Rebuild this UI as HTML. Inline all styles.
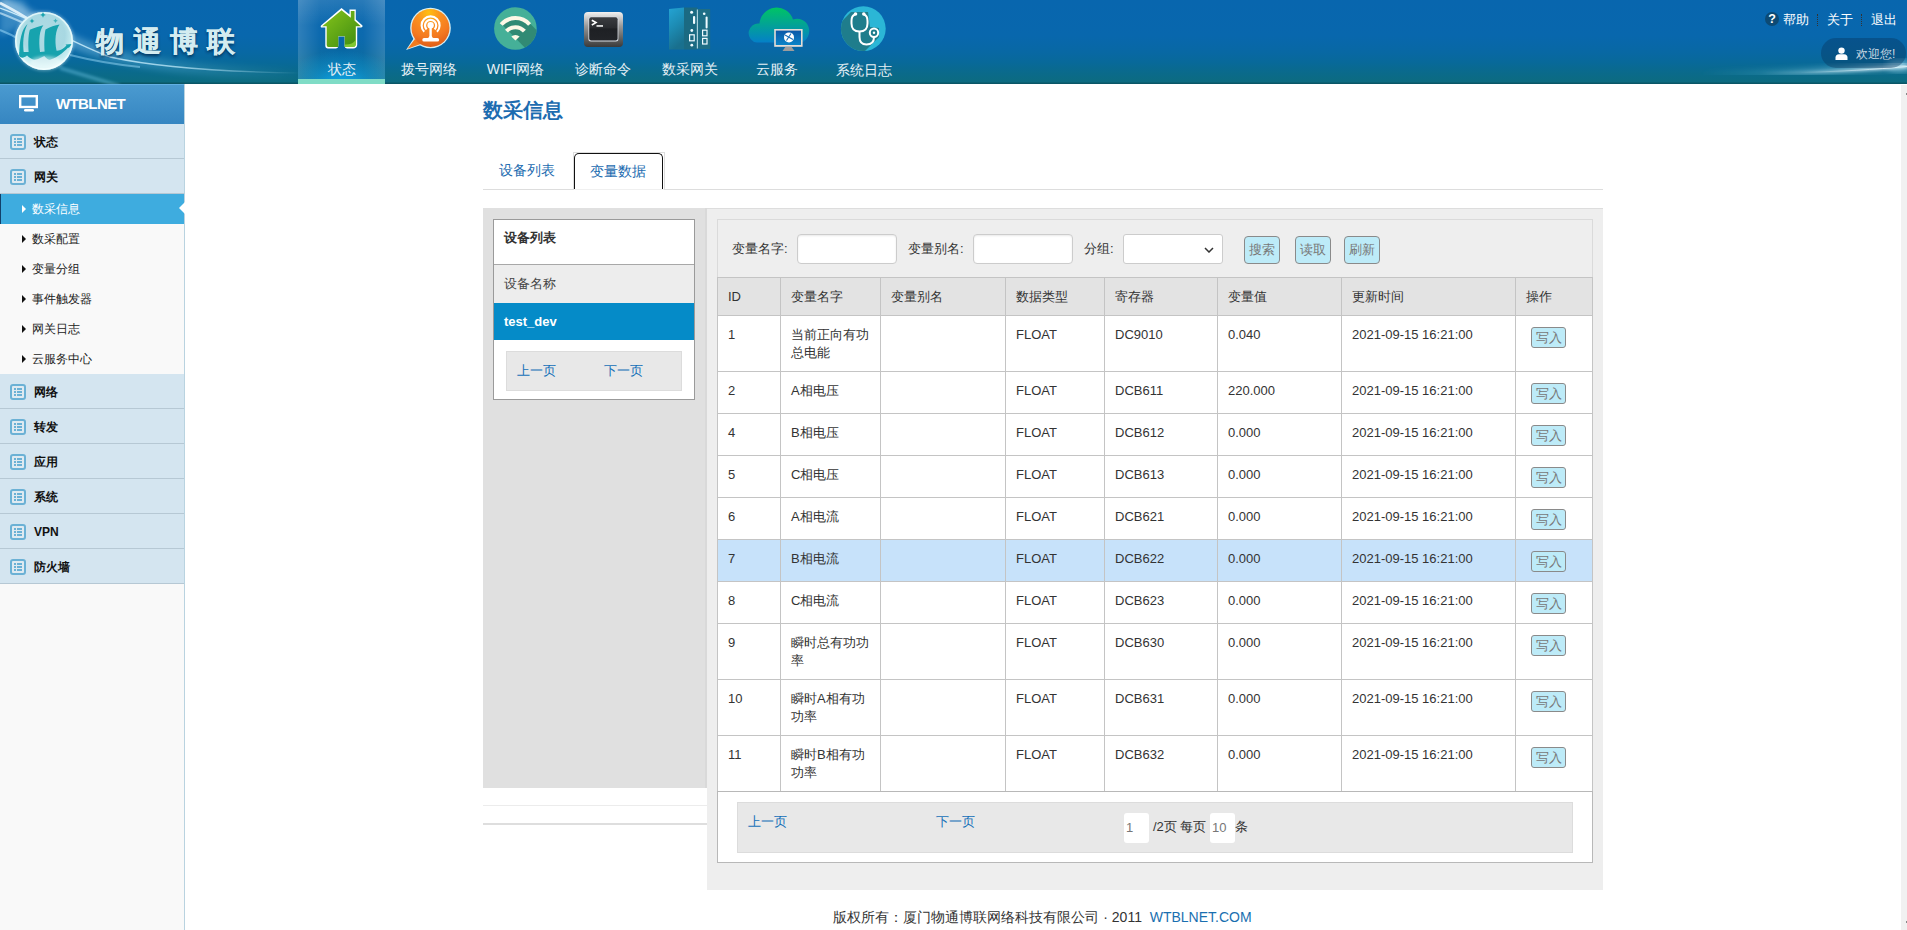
<!DOCTYPE html>
<html><head><meta charset="utf-8">
<style>
*{box-sizing:border-box;margin:0;padding:0}
html,body{width:1907px;height:930px;overflow:hidden;background:#fff;font-family:"Liberation Sans",sans-serif;color:#333}
.abs{position:absolute}
#hdr{position:absolute;left:0;top:0;width:1907px;height:84px;overflow:hidden;
 background:linear-gradient(to bottom,#0866ae 0px,#0867ad 36px,#0868a4 52px,#08699a 62px,#0a6a8c 72px,#0c6b80 82px,#0a5666 83px,#0a5666 84px)}
#side{position:absolute;left:0;top:84px;width:185px;height:846px;background:#f9f9f9;border-right:1px solid #b9d3e0}
#main{position:absolute;left:185px;top:84px;width:1715px;height:846px;background:#fff}
#sb{position:absolute;left:1901px;top:85px;width:6px;height:845px;background:#f1f1f1}

.sh{position:relative;height:40px;background:linear-gradient(#4a9ad0,#3686c1);border-top:1px solid #62b0e4;color:#fff}
.sh .mon{position:absolute;left:19px;top:10px}
.sh span{position:absolute;left:56px;top:10px;font-weight:bold;font-size:15px;letter-spacing:-0.6px;line-height:18px}
.mi{position:relative;height:35px;background:#d4e5f0;border-bottom:1px solid #b6c8d4}
.mi b{position:absolute;left:34px;top:9px;font-size:12px;line-height:18px;color:#111}
.ic{position:absolute;left:10px;top:10px;width:16px;height:16px;border:2px solid #6bb1d5;border-radius:3px;background:#dfeaf1}
.ic:before{content:"";position:absolute;left:2px;top:2px;width:8px;height:8px;background:linear-gradient(#6bb1d5 0 2px,transparent 2px 3px,#6bb1d5 3px 5px,transparent 5px 6px,#6bb1d5 6px 8px)}
.ic:after{content:"";position:absolute;left:4px;top:2px;width:1px;height:8px;background:#dfeaf1}
.sm{position:relative;height:30px;font-size:12px;line-height:31px;padding-left:32px;color:#222}
.sm .tri{position:absolute;left:22px;top:11px;width:0;height:0;border-left:4px solid #111;border-top:4px solid transparent;border-bottom:4px solid transparent}
.sm.act{background:#3eacdf;color:#fff;border-left:1px solid #12406a;padding-left:31px}
.sm.act .tri{border-left-color:#fff;left:21px}
.notch{position:absolute;right:-1px;top:8px;width:0;height:0;border-right:6px solid #fff;border-top:6px solid transparent;border-bottom:6px solid transparent}

.navact{position:absolute;left:298px;top:0;width:87px;height:84px;background:radial-gradient(ellipse 70% 40% at 50% 100%,rgba(12,170,242,0.95) 0%,rgba(14,155,230,0.5) 50%,rgba(14,140,220,0) 100%),linear-gradient(to right,rgba(255,255,255,0.16) 0%,rgba(255,255,255,0.02) 25%,rgba(255,255,255,0) 50%,rgba(255,255,255,0.02) 75%,rgba(255,255,255,0.16) 100%),linear-gradient(to bottom,rgba(255,255,255,0.12) 0%,rgba(255,255,255,0) 30%,rgba(0,0,0,0) 60%)}
.navact:after{content:"";position:absolute;left:0;bottom:0;width:87px;height:5px;background:#7fdcc6}
.nav{position:absolute;top:0;width:87px;height:84px}
.nav svg{position:absolute;left:0;top:0}
.nav span{position:absolute;left:0;top:59px;width:87px;text-align:center;color:#e6f0f6;font-size:14px;line-height:20px;white-space:nowrap}
.tlinks{position:absolute;left:1765px;top:10px;width:140px;height:20px;color:#fff;font-size:13px}
.tlinks span{position:absolute;top:0;line-height:20px}
.tlinks .q{position:absolute;left:0;top:2px;width:14px;height:14px;border-radius:7px;background:#0c4a74;color:#fff;font-style:normal;font-weight:bold;font-size:12.5px;line-height:15px;text-align:center}
.tlinks .sep{position:absolute;top:4px;height:12px;border-left:1px dotted #333}
.welc{position:absolute;left:1821px;top:38px;width:85px;height:30px;border-radius:15px;background:rgba(8,50,90,0.38);color:#c8d8e2;font-size:12px}
.welc span{position:absolute;left:35px;top:7px;line-height:18px}

#cnt{position:absolute;left:0;top:0;width:1907px;height:930px}
#cnt>div{position:absolute}
.ttl{left:483px;top:96px;font-size:20px;line-height:28px;font-weight:bold;color:#1d6cb0}
.tabline{left:483px;top:189px;width:1120px;height:1px;background:#ddd}
.tab1{left:499px;top:160px;font-size:14px;line-height:20px;color:#1d6cb0}
.tab2{left:573px;top:152px;width:92px;height:38px;border:1px solid #ddd;border-bottom:none;background:#fff}
.tab2 .ring{position:absolute;left:0.3px;top:0px;width:88.4px;height:36.6px;border:1.7px solid #111;border-bottom:none;border-radius:5px 5px 0 0}
.tab2:after{content:"";position:absolute;left:0;bottom:0;width:90px;height:1px;background:#f0f0f0}
.tab2 span{position:absolute;left:16px;top:8px;font-size:14px;line-height:20px;color:#1d6cb0}
.lp{left:483px;top:208px;width:224px;height:580px;background:#e0e0e0;border-right:2px solid #d9d9d9}
.dl{position:absolute;left:10px;top:11px;width:202px;height:181px;border:1px solid #9a9a9a;background:#fff}
.dlh{height:45px;border-bottom:1px solid #a8a8a8;font-weight:bold;font-size:13px;line-height:18px;padding:9px 0 0 10px;color:#333}
.dln{height:38px;background:#ededed;font-size:13px;line-height:18px;padding:10px 0 0 10px;color:#444}
.dld{height:37px;background:#058bc8;font-size:13px;line-height:18px;padding:10px 0 0 10px;color:#fff;font-weight:bold}
.dlp{position:relative;margin:11px 0 0 12px;width:176px;height:40px;background:#e8e8e8;border:1px solid #dcdcdc;font-size:13px;color:#1570b8}
.dlp span{position:absolute;top:10px;line-height:18px}
.lpl1{left:483px;top:805px;width:224px;height:1px;background:#ececec}
.lpl2{left:483px;top:823px;width:224px;height:2px;background:#dedede}
.rp{left:707px;top:208px;width:896px;height:682px;background:#eeeeee;border-top:1px solid #dddddd}
.ib{position:absolute;left:10px;top:10px;width:876px;height:644px;border:1px solid #dadada}
.lbl{position:absolute;top:20px;font-size:13px;line-height:18px;color:#333}
.inp{position:absolute;top:14px;width:100px;height:30px;background:#fff;border:1px solid #ccc;border-radius:4px;box-shadow:inset 0 1px 2px rgba(0,0,0,.09)}
.sel{position:absolute;top:14px;width:100px;height:30px;background:#fff;border:1px solid #ccc;border-radius:3px}
.sel svg{position:absolute;right:8px;top:12px}
.btn{position:absolute;top:16px;width:36px;height:28px;background:#bdebf8;border:1px solid #8a8a8a;border-radius:4px;color:#777;font-style:normal;font-size:13px;line-height:26px;text-align:center}
.tb{position:absolute;left:-1px;top:57px;width:876px;border-collapse:collapse;table-layout:fixed;font-size:13px;color:#333;background:#fff}
.tb td{border:1px solid #c4c4c4;padding:10px 10px 0 10px;vertical-align:top;line-height:18px;white-space:nowrap;overflow:hidden}
.tb tr.th td{background:#e3e3e3;height:38px}
.tb tr.r1 td{height:42px}
.tb tr.r2 td{height:56px}
.tb tr.hl td{background:#c7e2fa}
.wb{display:inline-block;margin-left:5px;margin-top:1px;width:35px;height:21px;background:#bdebf8;border:1px solid #8a8a8a;border-radius:3px;color:#777;font-style:normal;font-size:13px;line-height:19px;text-align:center}
.pgw{position:absolute;left:-1px;top:571px;width:876px;height:72px;background:#fff;border:1px solid #b8b8b8}
.pg{position:absolute;left:19px;top:582px;width:836px;height:51px;background:#e8e8e8;border:1px solid #dcdcdc;font-size:13px}
.pg span{position:absolute;line-height:18px}
.lk{top:10px;color:#1570b8}
.pt{top:15px;color:#333}
.pin{position:absolute;top:10px;width:25px;height:30px;background:#fff;border-radius:3px;font-style:normal;font-size:13px;line-height:29px;padding-left:2px;color:#777}
.ft{left:0;top:907px;width:1715px;padding-left:185px;box-sizing:content-box;text-align:center;font-size:14px;line-height:20px;color:#333}
.ft span{color:#1a6fb0}
</style></head><body>
<div id="hdr">
 <svg class="abs" style="left:0;top:0" width="1907" height="84" viewBox="0 0 1907 84">
  <defs>
   <linearGradient id="sw1" x1="0" y1="0" x2="1" y2="0">
    <stop offset="0" stop-color="#fff" stop-opacity="0.9"/><stop offset="0.5" stop-color="#8fe0ff" stop-opacity="0.5"/><stop offset="1" stop-color="#8fe0ff" stop-opacity="0"/>
   </linearGradient>
   <linearGradient id="sw2" x1="0" y1="0" x2="1" y2="0">
    <stop offset="0" stop-color="#5cc8f0" stop-opacity="0"/><stop offset="0.6" stop-color="#9fe4ff" stop-opacity="0.7"/><stop offset="1" stop-color="#fff" stop-opacity="0.9"/>
   </linearGradient>
   <radialGradient id="glob" cx="0.5" cy="0.4" r="0.6">
    <stop offset="0" stop-color="#b0dce4"/><stop offset="0.6" stop-color="#a8d8e2"/><stop offset="0.85" stop-color="#c8eef2"/><stop offset="1" stop-color="#eefcfc"/>
   </radialGradient>
   <linearGradient id="sw3" x1="0" y1="0" x2="1" y2="0"><stop offset="0" stop-color="#e8f8ff" stop-opacity="0"/><stop offset="0.7" stop-color="#e8f8ff" stop-opacity="0.8"/><stop offset="1" stop-color="#fff" stop-opacity="1"/></linearGradient><filter id="bl2s" x="-20%" y="-40%" width="140%" height="180%"><feGaussianBlur stdDeviation="1.8"/></filter><linearGradient id="sw4" gradientUnits="userSpaceOnUse" x1="0" y1="0" x2="300" y2="0"><stop offset="0" stop-color="#d8f4ff" stop-opacity="0.9"/><stop offset="0.6" stop-color="#c8f0ff" stop-opacity="0.7"/><stop offset="1" stop-color="#c8f0ff" stop-opacity="0"/></linearGradient><filter id="bl0"><feGaussianBlur stdDeviation="0.6"/></filter><filter id="bl1"><feGaussianBlur stdDeviation="1.5"/></filter>
   <filter id="bl2"><feGaussianBlur stdDeviation="3"/></filter>
  </defs>
  <!-- left swooshes -->
  <path d="M0 2 C20 10 40 22 70 40 C110 60 180 72 300 74" stroke="url(#sw1)" stroke-width="12" fill="none" filter="url(#bl2)" opacity="0.45"/>
  <path d="M0 3 C10 8 20 14 32 21" stroke="#fff" stroke-width="2.6" fill="none" filter="url(#bl0)" opacity="0.85"/>
  <path d="M0 13 C10 17 20 21 30 26" stroke="#e8f8ff" stroke-width="2" fill="none" filter="url(#bl0)" opacity="0.6"/>
  <path d="M0 30 C8 33 14 36 22 41" stroke="#9fe0ff" stroke-width="2" fill="none" filter="url(#bl0)" opacity="0.5"/>
  <path d="M0 0 L0 36 L30 22 L24 0 Z" fill="#bfeaff" opacity="0.25" filter="url(#bl2)"/>
  <path d="M0 8 C40 22 70 42 110 57 C160 68 230 72 300 73" stroke="url(#sw4)" stroke-width="1.3" fill="none"/>
  <path d="M70 55 C90 60 110 64 140 67" stroke="#a8e4ff" stroke-width="2" fill="none" filter="url(#bl0)" opacity="0.45"/>
  <path d="M60 68 C80 74 100 80 120 86" stroke="#7fd4f4" stroke-width="3" fill="none" filter="url(#bl1)" opacity="0.45"/>
  <!-- right swoosh -->
  <path d="M1700 74 C1780 73.5 1850 71 1907 64" stroke="url(#sw2)" stroke-width="5" fill="none" filter="url(#bl2)" opacity="0.7"/>
  <path d="M1760 73.5 C1820 72.5 1870 70 1907 66" stroke="url(#sw3)" stroke-width="2" fill="none" filter="url(#bl1)"/>
  <path d="M1800 72.5 C1840 71.5 1875 69.5 1907 66.5" stroke="url(#sw3)" stroke-width="1" fill="none" opacity="0.8" filter="url(#bl0)"/>
  <ellipse cx="1900" cy="66" rx="14" ry="6" fill="#bff0ff" opacity="0.45" filter="url(#bl2)"/>
  <!-- globe -->
  <circle cx="44" cy="41" r="30" fill="#e8fbff" opacity="0.35" filter="url(#bl1)"/>
  <circle cx="44" cy="41" r="29" fill="url(#glob)"/>
  <circle cx="44" cy="41" r="28.2" fill="none" stroke="#f4ffff" stroke-width="1.6" opacity="0.7"/>
  <g fill="#17a3ae">
   <path d="M27.5,24 C22,29 19,40 19.4,56 L24,54 C22.5,44 23,33 27.5,24 Z"/>
   <path d="M29.8,29.8 C35,27.5 40,26 43.4,25.3 C39.5,30 38.5,40 40,52 L29,56 C28,46 28,36 29.8,29.8 Z"/>
   <path d="M45.5,29.5 C50,27 55,25 59.6,24.4 C55.5,30 54.5,40 56.5,50.6 L45,56 C44,46 44,36 45.5,29.5 Z"/>
   <path d="M19.4,52 L19.4,56 C21,58.5 24,58 27,55.5 C30,58.5 33,60 36,59.6 C39,59 41.5,57 44.3,56 C46.5,58.5 48.5,60 50.6,59.6 C58,57.5 65,51 71.4,44.3 L67,45 C63,49 60,51 56.5,50.6 L40,52 L24,52 Z"/>
   <path d="M71.4,44.3 L65.5,44.6 L68.8,48 Z"/>
   <path d="M32,18.5 L32.8,20.2 L34.5,21 L32.8,21.8 L32,23.5 L31.2,21.8 L29.5,21 L31.2,20.2Z"/>
   <path d="M43,12 L43.9,14 L45.8,14.9 L43.9,15.8 L43,17.8 L42.1,15.8 L40.2,14.9 L42.1,14Z"/>
   <path d="M55.5,18.5 L56.3,20 L57.8,20.8 L56.3,21.6 L55.5,23 L54.7,21.6 L53.2,20.8 L54.7,20Z" opacity="0.7"/>
  </g>
  <ellipse cx="46" cy="62" rx="16" ry="6" fill="#fff" opacity="0.45" filter="url(#bl1)"/>
  <!-- logo text shadow glow -->
  <text x="96" y="52.5" font-family="Liberation Sans, sans-serif" font-weight="900" font-size="28" letter-spacing="9" fill="#041e40" opacity="0.8" filter="url(#bl2s)">物通博联</text>
  <text x="96" y="50.5" font-family="Liberation Sans, sans-serif" font-weight="900" font-size="28" letter-spacing="9" fill="#d4ecf0" stroke="#d4ecf0" stroke-width="0.3">物通博联</text>
 </svg>
 <div class="navact"></div>
 <div class="nav" style="left:298px">
  <svg width="87" height="56" viewBox="0 0 87 56"><g transform="translate(-298,0)">
   <path d="M341.5 8 L349.5 14.5 L349.5 9.5 L355.8 9.5 L355.8 19.5 L362.5 25.5 Q363 27.5 361 27.5 L357.2 27.5 L357.2 45 Q357 48.4 353 48.4 L347 48.4 Q344.6 48.4 344.6 46 L344.6 36.5 L338.3 36.5 L338.3 46 Q338.3 48.4 336 48.4 L328 48.4 Q325.3 48.4 325.3 45.5 L325.3 27.5 L322 27.5 Q320 27.5 321 25.5 Z" fill="#fff"/>
   <defs><linearGradient id="hg" x1="0" y1="0" x2="1" y2="1"><stop offset="0" stop-color="#86c41a"/><stop offset="1" stop-color="#3c8a12"/></linearGradient></defs>
   <path d="M341.5 10.3 L350.8 17.8 L350.8 11 L354.5 11 L354.5 20.6 L360.8 26.2 L355.8 26.2 L355.8 44.5 Q355.6 47 352.5 47 L344.7 47 L344.7 36.3 L338.3 36.3 L338.3 47 L328.5 47 Q326.7 47 326.7 45 L326.7 26.2 L322.2 26.2 Z" fill="url(#hg)"/>
   <path d="M344.7 47 L352.5 47 Q355.6 47 355.8 44 L355.8 40 Q352 45 344.7 44.5 Z" fill="#8fd43a" opacity="0.8"/>
  </g></svg>
  <span>状态</span></div>
 <div class="nav" style="left:385px">
  <svg width="87" height="56" viewBox="0 0 87 56"><g transform="translate(-385,0)">
   <defs><radialGradient id="og" cx="0.45" cy="0.1" r="0.9"><stop offset="0" stop-color="#ffc010"/><stop offset="0.35" stop-color="#fb9020"/><stop offset="0.7" stop-color="#f47a20"/><stop offset="1" stop-color="#e05e18"/></radialGradient></defs>
   <circle cx="430.5" cy="28" r="20.3" fill="#d8f0f4"/>
   <path d="M406 50 L414 38 L424 44 Z" fill="#d8f0f4"/>
   <path d="M407.5 48.8 L415 39 L422 43.5 Z" fill="#f07a1e"/>
   <circle cx="430.5" cy="28" r="19" fill="url(#og)"/>
   <path d="M424.24 31.76 A9 9 0 1 1 436.96 31.76" stroke="#fff" stroke-width="2.1" fill="none"/>
   <path d="M426.64 29.36 A5.6 5.6 0 1 1 434.56 29.36" stroke="#fff" stroke-width="2.2" fill="none"/>
   <circle cx="430.6" cy="25.3" r="3.2" fill="#fff"/>
   <path d="M429.4 27 L431.8 27 L431.8 36 Q432 37.8 434 38.2 L427.2 38.2 Q429.2 37.8 429.4 36 Z" fill="#fff"/>
   <rect x="422.3" y="38" width="16.8" height="3.6" rx="1.7" fill="#fff"/>
  </g></svg>
  <span>拨号网络</span></div>
 <div class="nav" style="left:472px">
  <svg width="87" height="56" viewBox="0 0 87 56"><g transform="translate(-472,0)">
   <defs><clipPath id="wc"><circle cx="515.4" cy="28.5" r="21.3"/></clipPath></defs>
   <circle cx="515.4" cy="28.5" r="21.3" fill="#45b098"/>
   <path d="M501 23.5 L512 18 L520 18 L530 23.5 L562 55 L532 55 Z" fill="#318a74" clip-path="url(#wc)"/>
   <path d="M501.2 26.5 A19 19 0 0 1 529.6 26.5" stroke="#fdf8e6" stroke-width="4" fill="none" transform="translate(0,-2)"/>
   <path d="M506.5 32.2 A12 12 0 0 1 524.4 32.2" stroke="#fdf8e6" stroke-width="4" fill="none" transform="translate(0,-1)"/>
   <path d="M511.3 36.6 A6 6 0 0 1 519.6 36.6 L515.4 40.5 Z" fill="#fdf8e6"/>
  </g></svg>
  <span>WIFI网络</span></div>
 <div class="nav" style="left:559px">
  <svg width="87" height="56" viewBox="0 0 87 56"><g transform="translate(-559,0)">
   <defs><linearGradient id="tg" x1="0" y1="0" x2="0" y2="1"><stop offset="0" stop-color="#f2f2f2"/><stop offset="0.4" stop-color="#9a9a9a"/><stop offset="1" stop-color="#3a3a3a"/></linearGradient>
   <linearGradient id="tg2" x1="0" y1="0" x2="0" y2="1"><stop offset="0" stop-color="#3a3c40"/><stop offset="0.45" stop-color="#2a2c30"/><stop offset="0.5" stop-color="#1e2024"/><stop offset="1" stop-color="#222428"/></linearGradient></defs>
   <rect x="584" y="12" width="39" height="35" rx="4" fill="url(#tg)"/>
   <rect x="588.4" y="16.4" width="30" height="25" rx="2.5" fill="#d8dde4"/>
   <rect x="589.2" y="17.2" width="28.4" height="23.4" rx="2" fill="url(#tg2)"/>
   <path d="M591.8 20.2 L596 22.6 L591.8 25" stroke="#fff" stroke-width="1.6" fill="none"/>
   <rect x="596.5" y="25.2" width="6.5" height="1.5" fill="#fff"/>
  </g></svg>
  <span>诊断命令</span></div>
 <div class="nav" style="left:646px">
  <svg width="87" height="56" viewBox="0 0 87 56"><g transform="translate(-646,0)">
   <defs><linearGradient id="gg" x1="0" y1="0" x2="0.3" y2="1"><stop offset="0" stop-color="#24a4d4"/><stop offset="0.5" stop-color="#1d8cb4"/><stop offset="1" stop-color="#19708e"/></linearGradient></defs>
   <path d="M669 9 L684 7.5 L684 49.5 L669 49.5 Z" fill="url(#gg)"/>
   <rect x="684" y="7.5" width="13.5" height="42" fill="#1b6a82"/>
   <rect x="696.8" y="9.5" width="1.3" height="39" fill="#a8d0dc"/>
   <rect x="698" y="9" width="12.2" height="40" fill="#1e6e86"/>
   <g fill="#f0fbff">
    <circle cx="691.6" cy="12.2" r="1.5"/><rect x="693" y="16" width="2.2" height="8" rx="1"/>
    <circle cx="691.8" cy="30.5" r="1.4"/><circle cx="691.8" cy="45.2" r="1.4"/>
    <circle cx="704.2" cy="13.8" r="1.3"/><rect x="705.6" y="16.5" width="2" height="12" rx="1"/>
   </g>
   <g fill="none" stroke="#f0fbff" stroke-width="1.2">
    <rect x="689.6" y="34.8" width="4.6" height="6"/><rect x="702.6" y="30.2" width="4.4" height="5.6"/><rect x="702.6" y="38.4" width="4.4" height="5.6"/>
   </g>
  </g></svg>
  <span>数采网关</span></div>
 <div class="nav" style="left:733px">
  <svg width="87" height="56" viewBox="0 0 87 56"><g transform="translate(-733,0)">
   <defs><linearGradient id="cg" x1="0" y1="0" x2="0" y2="1"><stop offset="0" stop-color="#00c464"/><stop offset="1" stop-color="#0480c8"/></linearGradient>
   <linearGradient id="sg" x1="0" y1="0" x2="0" y2="1"><stop offset="0" stop-color="#0a58a8"/><stop offset="1" stop-color="#0a84c8"/></linearGradient></defs>
   <path d="M757 42.6 A9.6 9.6 0 0 1 759.5 23.5 A17.2 17.2 0 0 1 793 19.5 A11 11 0 0 1 801 42.6 Z" fill="url(#cg)"/>
   <rect x="774.2" y="29" width="28.4" height="17.8" fill="#e4dcd6"/>
   <rect x="775.8" y="30.6" width="25.2" height="14.4" fill="url(#sg)"/>
   <path d="M785.5 46.8 L791.5 46.8 L794.5 51 L782.5 51 Z" fill="#9c9c9c"/>
   <circle cx="789" cy="37.4" r="5" fill="#fff"/>
   <path d="M785 35 L793 39.5 M786.5 40.5 L791 33.5" stroke="#1a70b8" stroke-width="1.1"/>
  </g></svg>
  <span>云服务</span></div>
 <div class="nav" style="left:820px">
  <svg width="87" height="56" viewBox="0 0 87 56"><g transform="translate(-820,0)">
   <defs><clipPath id="stc"><circle cx="863.3" cy="28.7" r="22.4"/></clipPath></defs>
   <circle cx="863.3" cy="28.7" r="22.4" fill="#2bb6d6"/>
   <path d="M851 12 L868 12 L870 27 L879 28 L879 37 L849 67 L821 42 Z" fill="#1f7d8c" clip-path="url(#stc)"/>
   <path d="M855 14.5 Q851.5 15.5 851.5 21 L851.5 23.5 Q851.5 31.5 859.5 31.5 Q867.5 31.5 867.5 23.5 L867.5 21 Q867.5 15.5 864 14.5" stroke="#fff" stroke-width="2" fill="none"/>
   <circle cx="855.5" cy="14" r="1.8" fill="#fff"/><circle cx="863.8" cy="14" r="1.8" fill="#fff"/>
   <path d="M859.5 31.5 L859.5 37 Q859.5 44.5 866.5 44.5 Q874 44.5 874 37" stroke="#fff" stroke-width="2" fill="none"/>
   <circle cx="874" cy="32.7" r="4.2" stroke="#fff" stroke-width="2" fill="#1f7d8c"/>
   <circle cx="874" cy="32.7" r="1.2" fill="#fff"/>
  </g></svg>
  <span style="top:60px">系统日志</span></div>
 <div class="tlinks"><i class="q">?</i><span style="left:18px">帮助</span><i class="sep" style="left:52px"></i><span style="left:62px">关于</span><i class="sep" style="left:96px"></i><span style="left:106px">退出</span></div>
 <div class="welc"><svg class="abs" style="left:14px;top:9px" width="13" height="13" viewBox="0 0 13 13"><circle cx="6.5" cy="3.6" r="3.2" fill="#fff"/><path d="M0.5 13 L0.5 10.5 Q0.5 7.5 4 7.2 L9 7.2 Q12.5 7.5 12.5 10.5 L12.5 13 Z" fill="#fff"/></svg><span>欢迎您!</span></div>
</div>

<div id="side">
 <div class="sh"><svg class="mon" width="20" height="17" viewBox="0 0 20 17"><rect x="1.2" y="1.2" width="16.6" height="10.8" fill="none" stroke="#fff" stroke-width="2.4"/><rect x="5" y="14" width="10" height="2.6" rx="1.3" fill="#fff"/></svg><span>WTBLNET</span></div>
 <div class="mi"><i class="ic"></i><b>状态</b></div>
 <div class="mi"><i class="ic"></i><b>网关</b></div>
 <div class="sm act"><i class="tri"></i>数采信息<i class="notch"></i></div>
 <div class="sm"><i class="tri"></i>数采配置</div>
 <div class="sm"><i class="tri"></i>变量分组</div>
 <div class="sm"><i class="tri"></i>事件触发器</div>
 <div class="sm"><i class="tri"></i>网关日志</div>
 <div class="sm"><i class="tri"></i>云服务中心</div>
 <div class="mi"><i class="ic"></i><b>网络</b></div>
 <div class="mi"><i class="ic"></i><b>转发</b></div>
 <div class="mi"><i class="ic"></i><b>应用</b></div>
 <div class="mi"><i class="ic"></i><b>系统</b></div>
 <div class="mi"><i class="ic"></i><b>VPN</b></div>
 <div class="mi"><i class="ic"></i><b>防火墙</b></div>
</div>

<div id="main"></div>
<div id="cnt">
 <div class="ttl">数采信息</div>
 <div class="tabline"></div>
 <div class="tab1">设备列表</div>
 <div class="tab2"><div class="ring"></div><span>变量数据</span></div>
 <div class="lp">
  <div class="dl">
   <div class="dlh">设备列表</div>
   <div class="dln">设备名称</div>
   <div class="dld">test_dev</div>
   <div class="dlp"><span style="left:10px">上一页</span><span style="left:97px">下一页</span></div>
  </div>
 </div>
 <div class="lpl1"></div><div class="lpl2"></div>
 <div class="rp">
  <div class="ib">
   <span class="lbl" style="left:14px">变量名字:</span><i class="inp" style="left:79px"></i>
   <span class="lbl" style="left:190px">变量别名:</span><i class="inp" style="left:255px"></i>
   <span class="lbl" style="left:366px">分组:</span><i class="sel" style="left:405px"><svg width="10" height="6" viewBox="0 0 10 6"><path d="M1 1 L5 5 L9 1" stroke="#333" stroke-width="1.5" fill="none"/></svg></i>
   <i class="btn" style="left:526px">搜索</i><i class="btn" style="left:577px">读取</i><i class="btn" style="left:626px">刷新</i>
   <table class="tb">
    <colgroup><col style="width:63px"><col style="width:100px"><col style="width:125px"><col style="width:99px"><col style="width:113px"><col style="width:124px"><col style="width:174px"><col style="width:77px"></colgroup>
    <tr class="th"><td>ID</td><td>变量名字</td><td>变量别名</td><td>数据类型</td><td>寄存器</td><td>变量值</td><td>更新时间</td><td>操作</td></tr>
    <tr class="r2"><td>1</td><td>当前正向有功<br>总电能</td><td></td><td>FLOAT</td><td>DC9010</td><td>0.040</td><td>2021-09-15 16:21:00</td><td><i class="wb">写入</i></td></tr>
    <tr class="r1"><td>2</td><td>A相电压</td><td></td><td>FLOAT</td><td>DCB611</td><td>220.000</td><td>2021-09-15 16:21:00</td><td><i class="wb">写入</i></td></tr>
    <tr class="r1"><td>4</td><td>B相电压</td><td></td><td>FLOAT</td><td>DCB612</td><td>0.000</td><td>2021-09-15 16:21:00</td><td><i class="wb">写入</i></td></tr>
    <tr class="r1"><td>5</td><td>C相电压</td><td></td><td>FLOAT</td><td>DCB613</td><td>0.000</td><td>2021-09-15 16:21:00</td><td><i class="wb">写入</i></td></tr>
    <tr class="r1"><td>6</td><td>A相电流</td><td></td><td>FLOAT</td><td>DCB621</td><td>0.000</td><td>2021-09-15 16:21:00</td><td><i class="wb">写入</i></td></tr>
    <tr class="r1 hl"><td>7</td><td>B相电流</td><td></td><td>FLOAT</td><td>DCB622</td><td>0.000</td><td>2021-09-15 16:21:00</td><td><i class="wb">写入</i></td></tr>
    <tr class="r1"><td>8</td><td>C相电流</td><td></td><td>FLOAT</td><td>DCB623</td><td>0.000</td><td>2021-09-15 16:21:00</td><td><i class="wb">写入</i></td></tr>
    <tr class="r2"><td>9</td><td>瞬时总有功功<br>率</td><td></td><td>FLOAT</td><td>DCB630</td><td>0.000</td><td>2021-09-15 16:21:00</td><td><i class="wb">写入</i></td></tr>
    <tr class="r2"><td>10</td><td>瞬时A相有功<br>功率</td><td></td><td>FLOAT</td><td>DCB631</td><td>0.000</td><td>2021-09-15 16:21:00</td><td><i class="wb">写入</i></td></tr>
    <tr class="r2"><td>11</td><td>瞬时B相有功<br>功率</td><td></td><td>FLOAT</td><td>DCB632</td><td>0.000</td><td>2021-09-15 16:21:00</td><td><i class="wb">写入</i></td></tr>
   </table>
   <div class="pgw"></div><div class="pg"><span class="lk" style="left:10px">上一页</span><span class="lk" style="left:198px">下一页</span><i class="pin" style="left:386px">1</i><span class="pt" style="left:415px">/2页 每页</span><i class="pin" style="left:472px">10</i><span class="pt" style="left:497px">条</span></div>
  </div>
 </div>
 <div class="ft">版权所有：厦门物通博联网络科技有限公司 · 2011 &nbsp;<span>WTBLNET.COM</span></div>
</div>

<div id="sb"></div><div class="abs" style="left:1906px;top:93px;width:1px;height:2px;background:#888"></div><div class="abs" style="left:1906px;top:921px;width:1px;height:2px;background:#888"></div>
</body></html>
